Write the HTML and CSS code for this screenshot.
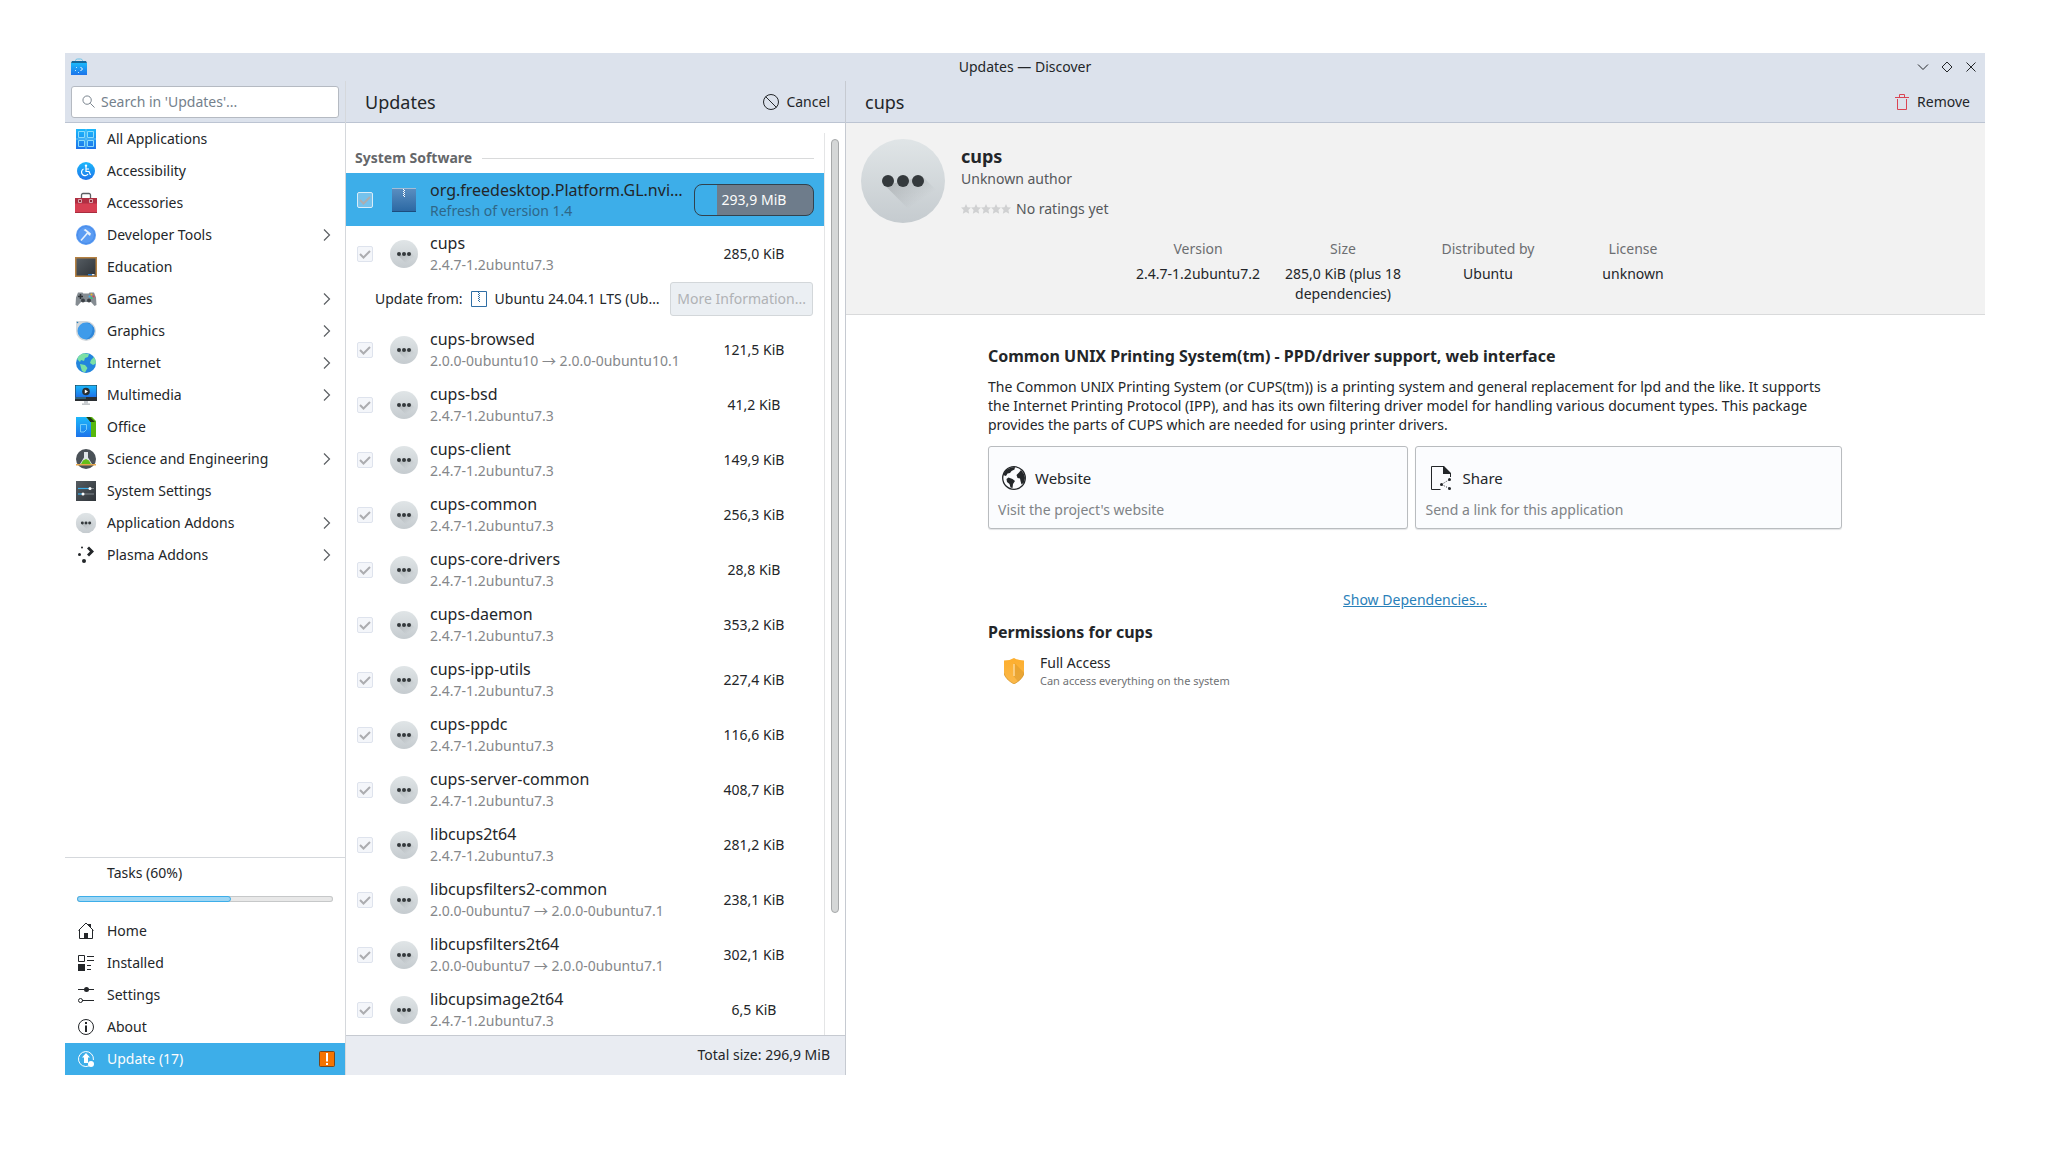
FILE: index.html
```html
<!DOCTYPE html>
<html lang="en">
<head>
  <meta charset="UTF-8">
  <meta name="viewport" content="width=device-width, initial-scale=1.0">
  <title>Updates — Discover</title>
  <link rel="stylesheet" href="styles.css">
</head>
<body>
  <!-- shared icons -->
  <svg class="sprite" aria-hidden="true">
    <defs>
      <linearGradient id="grey" x1="0" y1="0" x2="0" y2="1"><stop offset="0" stop-color="#e0e5e7"/><stop offset="1" stop-color="#c5cbcf"/></linearGradient>
      <linearGradient id="shade" x1="0" y1="0" x2="1" y2="1"><stop offset="0" stop-color="#292c2f" stop-opacity=".22"/><stop offset=".7" stop-color="#292c2f" stop-opacity="0"/></linearGradient>
      <linearGradient id="blue" x1="0" y1="0" x2="0" y2="1"><stop offset="0" stop-color="#1cb8fb"/><stop offset="1" stop-color="#1d73ea"/></linearGradient>
      <linearGradient id="box" x1="0" y1="0" x2="0" y2="1"><stop offset="0" stop-color="#5b8fc2"/><stop offset="1" stop-color="#2a67a2"/></linearGradient>
      <linearGradient id="dark" x1="0" y1="0" x2="1" y2="1"><stop offset="0" stop-color="#555c62"/><stop offset="1" stop-color="#2f3439"/></linearGradient>
      <linearGradient id="gold" x1="0" y1="0" x2="0" y2="1"><stop offset="0" stop-color="#fdae2d"/><stop offset="1" stop-color="#fbb94b"/></linearGradient>
    </defs>
    <symbol id="package" viewBox="0 0 28 28">
      <circle cx="14" cy="14" r="14" fill="url(#grey)"/>
      <path d="M8 15.500 15 22.500 17.500 24 25 17 20.500 12.500z" fill="url(#shade)"/>
      <g fill="#34393c"><circle cx="9" cy="14" r="2"/><circle cx="14" cy="14" r="2"/><circle cx="19" cy="14" r="2"/></g>
    </symbol>
    <symbol id="chevron" viewBox="0 0 8 14"><path d="M1 1.500 6.500 7 1 12.500" fill="none" stroke="#5b5f63" stroke-width="1.200"/></symbol>
  </svg>

  <main class="window">
    <header class="titlebar">
      <svg class="app-icon" viewBox="0 0 16 18"><path d="M4.500 4V2.500A2 2 0 0 1 6.500 1h3a2 2 0 0 1 2 1.500V4" fill="none" stroke="#6bc3e8"/><path d="M1 3h14l1 2H0z" fill="#16689c"/><path d="M0 5h16v12H0z" fill="url(#blue)"/><path d="m9.500 9 2 2-2 2" fill="none" stroke="#fff"/><path d="M5 9h1v1H5zM4 12h1v1H4zM7 14h1v1H7z" fill="#bfe6ff"/></svg>
      <h1>Updates — Discover</h1>
      <div class="window-buttons">
        <button type="button" aria-label="Minimize"><svg viewBox="0 0 12 12"><path d="M1 3.500 6 8.500 11 3.500"/></svg></button>
        <button type="button" aria-label="Maximize"><svg viewBox="0 0 12 12"><path d="M6 1 11 6 6 11 1 6z"/></svg></button>
        <button type="button" aria-label="Close"><svg viewBox="0 0 12 12"><path d="M1.500 1.500l9 9M10.500 1.500l-9 9"/></svg></button>
      </div>
    </header>

    <div class="panes">
      <aside class="sidebar">
        <div class="toolbar search">
          <label for="search"><svg viewBox="0 0 14 14"><circle cx="5.500" cy="5.500" r="4.500"/><path d="m9 9 4.500 4.500"/></svg></label>
          <input type="search" id="search" placeholder="Search in 'Updates'..." aria-label="Search">
        </div>

        <nav class="menu categories">
          <a href="#"><svg viewBox="0 0 22 22"><path d="M1 1h20v20H1z" fill="url(#blue)"/><g fill="none" stroke="#8bdcfb"><path d="M3.500 3.500h6v6h-6zM12.500 3.500h6v6h-6zM3.500 12.500h6v6h-6zM12.500 12.500h6v6h-6z"/></g><path d="M11 1v20M1 11h20" stroke="#62c8f8"/></svg>All Applications</a>
          <a href="#"><svg viewBox="0 0 22 22"><circle cx="11" cy="11" r="9" fill="url(#blue)"/><g fill="none" stroke="#fff" stroke-width="1.200"><path d="M11 7v4.500h3l1.500 3.500M11 9h3M8.500 9a3.500 3.500 0 1 0 4.500 5"/></g><circle cx="11" cy="5.800" r="1.200" fill="#fff"/></svg>Accessibility</a>
          <a href="#"><svg viewBox="0 0 22 22"><path d="M6.500 6V3a1.500 1.500 0 0 1 1.500-1.500h6A1.500 1.500 0 0 1 15.500 3v3" fill="none" stroke="#5c5f63" stroke-width="1.300"/><path d="M0 6h22v15H0z" fill="#d63f52"/><path d="M0 6h22v5.500H0z" fill="#b02f42"/><path d="M0 20h22v1H0z" fill="#a92d3f"/><path d="M3.500 7.500h3v3h-3zM14.500 7.500h3v3h-3z" fill="#8e2636" stroke="#e3c5ca" stroke-width=".8"/></svg>Accessories</a>
          <a href="#"><svg viewBox="0 0 22 22"><circle cx="11" cy="11" r="10" fill="#5b9cf3"/><circle cx="11" cy="11" r="8.500" fill="none" stroke="#3d82e3" stroke-width=".6"/><path d="M6 16.500 12.500 9" stroke="#e7f1fd" stroke-width="1.600"/><path d="m8.500 6 2-1 5.500 4.500-1 2.500-2.500-2-1-2z" fill="#e7f1fd"/></svg>Developer Tools<svg class="more"><use href="#chevron"/></svg></a>
          <a href="#"><svg viewBox="0 0 22 22"><path d="M0 1h22v20H0z" fill="#b58142"/><path d="M1.500 2.500h19v17h-19z" fill="url(#dark)"/><path d="M13 18h4v1.300h-4z" fill="#2980d9"/><path d="M17 18h2.500v1.300H17z" fill="#eee"/></svg>Education</a>
          <a href="#"><svg viewBox="0 0 22 22"><path d="M3 4.500h4.500l.8 1h5.400l.8-1H19l2 5 .5 7.500-2 1-3.500-4H6l-3.500 4-2-1L1 9.500z" fill="#858c92"/><path d="M5.500 6v5M3 8.500h5" stroke="#30353a" stroke-width="1.600"/><circle cx="8" cy="12.500" r="2" fill="#3c4146"/><circle cx="14" cy="12.500" r="2" fill="#3c4146"/><circle cx="16.500" cy="6.500" r="1" fill="#f0b429"/><circle cx="18.500" cy="8.500" r="1" fill="#da4453"/><circle cx="14.500" cy="8.500" r="1" fill="#3daee9"/><circle cx="16.500" cy="10" r="1" fill="#2ecc71"/></svg>Games<svg class="more"><use href="#chevron"/></svg></a>
          <a href="#"><svg viewBox="0 0 22 22"><path d="M1 1h10a10 10 0 1 1-10 10z" fill="#d3d8db"/><circle cx="11" cy="11" r="8.500" fill="#3f9bea"/><path d="M11 2.500A8.500 8.500 0 0 1 11 19.500 12 12 0 0 0 17 5z" fill="#2f86d8"/><circle cx="2.500" cy="2.500" r=".8" fill="#2980b9"/></svg>Graphics<svg class="more"><use href="#chevron"/></svg></a>
          <a href="#"><svg viewBox="0 0 22 22"><circle cx="11" cy="11" r="10" fill="#2385dd"/><path d="M2 7A10 10 0 0 1 9 1.200L14 2l-1 3-3 1-1 3-3-1-1 2zM5 12l5 1 2.500 3L10 20.500 7 19l-1-3zM16 8l3-3a10 10 0 0 1 2 6.500L18 13l-3-2z" fill="#7be0a5"/></svg>Internet<svg class="more"><use href="#chevron"/></svg></a>
          <a href="#"><svg viewBox="0 0 22 22"><path d="M0 1h22v16H0z" fill="#2a2e32"/><path d="M0.500 1.500h21V13H.5z" fill="url(#blue)"/><circle cx="11" cy="7.500" r="3.800" fill="#2a2e32"/><path d="M9.800 5.500v4l3.200-2z" fill="#fff"/><path d="M0 14h11" stroke="#3daee9" stroke-width=".8"/><path d="M9 17h4v2.500H9z" fill="#c8ccd0"/><path d="M7 19.500h8v1.300H7z" fill="#b4b9bd"/></svg>Multimedia<svg class="more"><use href="#chevron"/></svg></a>
          <a href="#"><svg viewBox="0 0 22 22"><path d="M11 1h6l4 4v16H11z" fill="#58b80d"/><path d="M1 1h10l5 5v15H1z" fill="url(#blue)"/><path d="M11.500 1H15v4.500zM15 1l5 5h-5z" fill="#223a13"/><path d="M5.500 8.500h6v5l-2.500 2.500H5.500z" fill="none" stroke="#7fd3fb" stroke-width=".9"/></svg>Office</a>
          <a href="#"><svg viewBox="0 0 22 22"><circle cx="11" cy="11" r="10" fill="#4a5157"/><path d="M9 4h4v5.500L17 16H5l4-6.500z" fill="#dfe5e8"/><path d="m8 12.500 3-1.500 3 1.500 2 3.500H6z" fill="#63bd19"/><path d="M1 16h20v1.500H1z" fill="#e6a84e"/></svg>Science and Engineering<svg class="more"><use href="#chevron"/></svg></a>
          <a href="#"><svg viewBox="0 0 22 22"><path d="M1 1h20v20H1z" fill="url(#dark)"/><path d="M3 8.500h12" stroke="#3daee9" stroke-width="1.200"/><path d="M15 8.500h4M8 14h11" stroke="#7e858b" stroke-width="1.200"/><path d="M3 14h5" stroke="#3daee9" stroke-width="1.200"/><circle cx="15" cy="8.500" r="1.500" fill="#fff"/><circle cx="8" cy="14" r="1.500" fill="#fff"/></svg>System Settings</a>
          <a href="#"><svg viewBox="-1 -1 30 30"><use href="#package" width="28" height="28"/></svg>Application Addons<svg class="more"><use href="#chevron"/></svg></a>
          <a href="#"><svg viewBox="0 0 22 22"><g fill="#232629"><circle cx="7" cy="3.500" r="1"/><circle cx="4.500" cy="10.500" r="1.500"/><circle cx="9" cy="17" r="2"/><path d="m12 4.500 2-2 5 5-5 5-2-2 3-3z"/></g></svg>Plasma Addons<svg class="more"><use href="#chevron"/></svg></a>
        </nav>

        <div class="tasks">
          <label for="tasks">Tasks (60%)</label>
          <progress id="tasks" value="60" max="100"></progress>
        </div>

        <nav class="menu">
          <a href="#"><svg viewBox="0 0 22 22"><path d="M4.500 10v8.500h13V10M3.500 10.500 11 3l7.500 7.500" fill="none" stroke="#232629"/><path d="M9 13h4v6H9zM12.500 4H16v4z" fill="#232629"/></svg>Home</a>
          <a href="#"><svg viewBox="0 0 22 22"><path d="M3.500 3.500h6v6h-6zM12 4.500h7M12 8.500h7M12 13.500h4M12 17.500h4" fill="none" stroke="#232629"/><path d="M3 12h7v7H3z" fill="#232629"/></svg>Installed</a>
          <a href="#"><svg viewBox="0 0 22 22"><path d="M3 5.500h16M7 16.500h12" stroke="#232629"/><circle cx="11.500" cy="5.500" r="2.500" fill="#232629"/><circle cx="5.500" cy="16.500" r="2" fill="none" stroke="#232629"/></svg>Settings</a>
          <a href="#"><svg viewBox="0 0 22 22"><circle cx="11" cy="11" r="7.500" fill="none" stroke="#232629"/><path d="M10 6h2v2h-2zM10 9.500h2V16h-2z" fill="#232629"/></svg>About</a>
          <a href="#" class="active"><svg viewBox="0 0 22 22"><path d="M14 17.900A7.500 7.500 0 1 1 18.400 12" fill="none" stroke="#fff"/><path d="m11 5 4 4.500h-2V15H9V9.500H7z" fill="#fff"/><circle cx="16" cy="16" r="3" fill="#fff"/></svg>Update (17)<svg class="alert" viewBox="0 0 16 16"><rect x=".5" y=".5" width="15" height="15" rx="1" fill="#f67400" stroke="#74471f"/><path d="M7 2h2v8.500H7zM7 12h2v2H7z" fill="#fff"/></svg></a>
        </nav>
      </aside>

      <section class="updates">
        <div class="toolbar">
          <h2>Updates</h2>
          <button type="button" class="action"><svg viewBox="0 0 16 16"><circle cx="8" cy="8" r="7.500" fill="none" stroke="#232629"/><path d="m2.500 2.500 11 11" stroke="#232629"/></svg>Cancel</button>
        </div>

        <div class="scroll">
          <div class="list">
            <h3>System Software</h3>
            <ul>
              <li class="selected">
                <input type="checkbox" aria-label="org.freedesktop.Platform.GL.nvidia" checked disabled>
                <svg viewBox="0 0 28 28"><path d="M2 2h24v24H2z" fill="url(#box)"/><path d="M2 2h24v1H2z" fill="#a3bdd6"/><path d="M2 25h24v1H2z" fill="#1c4c7d"/><path d="M13.500 3v8M14.500 4v8" stroke="#fff" stroke-dasharray="1"/></svg>
                <div class="name"><strong>org.freedesktop.Platform.GL.nvi…</strong><span>Refresh of version 1.4</span></div>
                <div class="size pill">293,9 MiB</div>
              </li>
              <li>
                <input type="checkbox" aria-label="cups" checked disabled>
                <svg><use href="#package"/></svg>
                <div class="name"><strong>cups</strong><span>2.4.7-1.2ubuntu7.3</span></div>
                <div class="size">285,0 KiB</div>
              </li>
              <li class="source">
                <span>Update from:</span>
                <svg viewBox="0 0 16 16"><path d="M.5.5h15v15H.5z" fill="#fff" stroke="#2f6ea5"/><path d="M7.500 1v9M8.500 2v9" stroke="#2f6ea5" stroke-dasharray="1"/></svg>
                <span class="origin">Ubuntu 24.04.1 LTS (Ub…</span>
                <button type="button" disabled>More Information...</button>
              </li>
              <li>
                <input type="checkbox" aria-label="cups-browsed" checked disabled>
                <svg><use href="#package"/></svg>
                <div class="name"><strong>cups-browsed</strong><span>2.0.0-0ubuntu10 <i>→</i> 2.0.0-0ubuntu10.1</span></div>
                <div class="size">121,5 KiB</div>
              </li>
              <li>
                <input type="checkbox" aria-label="cups-bsd" checked disabled>
                <svg><use href="#package"/></svg>
                <div class="name"><strong>cups-bsd</strong><span>2.4.7-1.2ubuntu7.3</span></div>
                <div class="size">41,2 KiB</div>
              </li>
              <li>
                <input type="checkbox" aria-label="cups-client" checked disabled>
                <svg><use href="#package"/></svg>
                <div class="name"><strong>cups-client</strong><span>2.4.7-1.2ubuntu7.3</span></div>
                <div class="size">149,9 KiB</div>
              </li>
              <li>
                <input type="checkbox" aria-label="cups-common" checked disabled>
                <svg><use href="#package"/></svg>
                <div class="name"><strong>cups-common</strong><span>2.4.7-1.2ubuntu7.3</span></div>
                <div class="size">256,3 KiB</div>
              </li>
              <li>
                <input type="checkbox" aria-label="cups-core-drivers" checked disabled>
                <svg><use href="#package"/></svg>
                <div class="name"><strong>cups-core-drivers</strong><span>2.4.7-1.2ubuntu7.3</span></div>
                <div class="size">28,8 KiB</div>
              </li>
              <li>
                <input type="checkbox" aria-label="cups-daemon" checked disabled>
                <svg><use href="#package"/></svg>
                <div class="name"><strong>cups-daemon</strong><span>2.4.7-1.2ubuntu7.3</span></div>
                <div class="size">353,2 KiB</div>
              </li>
              <li>
                <input type="checkbox" aria-label="cups-ipp-utils" checked disabled>
                <svg><use href="#package"/></svg>
                <div class="name"><strong>cups-ipp-utils</strong><span>2.4.7-1.2ubuntu7.3</span></div>
                <div class="size">227,4 KiB</div>
              </li>
              <li>
                <input type="checkbox" aria-label="cups-ppdc" checked disabled>
                <svg><use href="#package"/></svg>
                <div class="name"><strong>cups-ppdc</strong><span>2.4.7-1.2ubuntu7.3</span></div>
                <div class="size">116,6 KiB</div>
              </li>
              <li>
                <input type="checkbox" aria-label="cups-server-common" checked disabled>
                <svg><use href="#package"/></svg>
                <div class="name"><strong>cups-server-common</strong><span>2.4.7-1.2ubuntu7.3</span></div>
                <div class="size">408,7 KiB</div>
              </li>
              <li>
                <input type="checkbox" aria-label="libcups2t64" checked disabled>
                <svg><use href="#package"/></svg>
                <div class="name"><strong>libcups2t64</strong><span>2.4.7-1.2ubuntu7.3</span></div>
                <div class="size">281,2 KiB</div>
              </li>
              <li>
                <input type="checkbox" aria-label="libcupsfilters2-common" checked disabled>
                <svg><use href="#package"/></svg>
                <div class="name"><strong>libcupsfilters2-common</strong><span>2.0.0-0ubuntu7 <i>→</i> 2.0.0-0ubuntu7.1</span></div>
                <div class="size">238,1 KiB</div>
              </li>
              <li>
                <input type="checkbox" aria-label="libcupsfilters2t64" checked disabled>
                <svg><use href="#package"/></svg>
                <div class="name"><strong>libcupsfilters2t64</strong><span>2.0.0-0ubuntu7 <i>→</i> 2.0.0-0ubuntu7.1</span></div>
                <div class="size">302,1 KiB</div>
              </li>
              <li>
                <input type="checkbox" aria-label="libcupsimage2t64" checked disabled>
                <svg><use href="#package"/></svg>
                <div class="name"><strong>libcupsimage2t64</strong><span>2.4.7-1.2ubuntu7.3</span></div>
                <div class="size">6,5 KiB</div>
              </li>
            </ul>
          </div>
          <div class="scrollbar"><div class="thumb"></div></div>
        </div>

        <footer>Total size: 296,9 MiB</footer>
      </section>

      <section class="details">
        <div class="toolbar">
          <h2>cups</h2>
          <button type="button" class="action"><svg viewBox="0 0 16 16"><path d="M1 3.500h14M5.500 3V.5h5V3M3.500 5v10.500h9V5" fill="none" stroke="#da4453"/></svg>Remove</button>
        </div>

        <div class="summary">
          <div class="app">
            <svg class="logo"><use href="#package"/></svg>
            <div>
              <h3>cups</h3>
              <p>Unknown author</p>
              <p class="rating">
                <svg viewBox="0 0 50 10"><defs><path id="star" d="m5 0 1.500 3.200 3.500.4L7.400 6l.8 3.700L5 7.900 1.800 9.700 2.600 6 0 3.600l3.500-.4z"/></defs><g fill="#d0d1d2"><use href="#star"/><use href="#star" x="10"/><use href="#star" x="20"/><use href="#star" x="30"/><use href="#star" x="40"/></g></svg>
                No ratings yet
              </p>
            </div>
          </div>
          <dl>
            <div><dt>Version</dt><dd>2.4.7-1.2ubuntu7.2</dd></div>
            <div><dt>Size</dt><dd>285,0 KiB (plus 18 dependencies)</dd></div>
            <div><dt>Distributed by</dt><dd>Ubuntu</dd></div>
            <div><dt>License</dt><dd>unknown</dd></div>
          </dl>
        </div>

        <article>
          <h3>Common UNIX Printing System(tm) - PPD/driver support, web interface</h3>
          <p>The Common UNIX Printing System (or CUPS(tm)) is a printing system and general replacement for lpd and the like. It supports the Internet Printing Protocol (IPP), and has its own filtering driver model for handling various document types. This package provides the parts of CUPS which are needed for using printer drivers.</p>
          <div class="cards">
            <button type="button">
              <span class="card-title"><svg viewBox="0 0 24 24"><circle cx="12" cy="12" r="11.300" fill="none" stroke="#232629" stroke-width="1.300"/><path d="M1 9 4 4 9 1.500 13 1l-.5 2.500L9.500 5 8 7 5.500 7.500 4 10zM4.500 13l2-1.500 4 1.500 2.500 2-2 3-.5 4-2-.5L7.500 18 5 16zM14.500 9l2.500-2.500L19 4l3 4 1 4-1 4.500-2.500 2-1-3.500-.5-2.500-2.500-.5z" fill="#232629"/></svg>Website</span>
              <span class="hint">Visit the project's website</span>
            </button>
            <button type="button">
              <span class="card-title"><svg viewBox="0 0 24 24"><path d="M11.500 23.500h-9V.5h12" fill="none" stroke="#232629"/><path d="M14 0h1l7 7v4h-1V8h-7z" fill="#232629"/><path d="m12.500 18.500 8-5M12.500 18.500l8 4" stroke="#232629" stroke-dasharray="1 1.500"/><g fill="#232629"><circle cx="12.500" cy="18.500" r="1.500"/><circle cx="20.500" cy="13.500" r="1.500"/><circle cx="20.500" cy="22.500" r="1.500"/></g></svg>Share</span>
              <span class="hint">Send a link for this application</span>
            </button>
          </div>
          <a class="deps" href="#">Show Dependencies...</a>
          <h3>Permissions for cups</h3>
          <div class="permission">
            <svg viewBox="0 0 20 26"><path d="M0 2.500Q6 2.500 10 0q4 2.500 10 2.500V15q-1 6-10 11Q1 21 0 15z" fill="url(#gold)"/><path d="M10.500 5 20 14.500V15q-1 5-6 8.500L9.500 18z" fill="#c98a1f" opacity=".35"/><path d="M0 15q1 6 10 11 9-5 10-11" fill="none" stroke="#d79527" stroke-width=".8"/><path d="M9.200 6h1.600v12H9.200z" fill="#fdd590"/></svg>
            <div>
              <p>Full Access</p>
              <small>Can access everything on the system</small>
            </div>
          </div>
        </article>
      </section>
    </div>
  </main>
</body>
</html>
```
FILE: styles.css
```css
* {
  box-sizing: border-box;
}
body {
  display: flex;
  height: 100vh;
  margin: 0;
  padding: 53px 65px 77px;
  background: #fff;
  color: #232629;
  font: 14px/20px "Noto Sans", sans-serif;
}
h1, h2, h3, p, ul, dl, dd {
  margin: 0;
  padding: 0;
}
button, input {
  color: inherit;
  font: inherit;
}
a {
  color: inherit;
  text-decoration: none;
}
svg {
  flex: none;
}
.sprite {
  position: absolute;
  width: 0;
  height: 0;
}

/* window frame */
.window {
  display: flex;
  flex: 1;
  flex-direction: column;
  min-width: 0;
}
.titlebar {
  display: grid;
  grid-template-columns: 1fr auto 1fr;
  align-items: center;
  height: 28px;
  padding: 0 8px;
  background: #dce2ec;
}
.titlebar h1 {
  font-size: 14px;
  font-weight: normal;
}
.app-icon {
  width: 16px;
  height: 18px;
  margin-left: -2px;
}
.window-buttons {
  display: flex;
  justify-content: flex-end;
  gap: 12px;
}
.window-buttons button {
  display: flex;
  padding: 0;
  border: none;
  background: none;
}
.window-buttons svg {
  width: 12px;
  height: 12px;
  fill: none;
  stroke: #232629;
}
.panes {
  display: flex;
  flex: 1;
  min-height: 0;
}
.toolbar {
  display: flex;
  align-items: center;
  justify-content: space-between;
  height: 42px;
  padding: 0 15px 0 19px;
  border-bottom: 1px solid #bcc4d2;
  background: #dce2ec;
}
.toolbar h2 {
  font-size: 18px;
  font-weight: normal;
}
.action {
  display: flex;
  align-items: center;
  gap: 7px;
  padding: 0;
  border: none;
  background: none;
}
.action svg {
  width: 16px;
  height: 16px;
}

/* sidebar */
.sidebar {
  display: flex;
  flex: none;
  flex-direction: column;
  width: 281px;
  border-right: 1px solid #d5d8dc;
}
.search {
  position: relative;
  padding: 0 6px;
}
.search label {
  position: absolute;
  left: 17px;
  display: flex;
}
.search svg {
  width: 13px;
  height: 13px;
  fill: none;
  stroke: #6f7a85;
}
.search input {
  width: 100%;
  height: 32px;
  padding: 0 8px 0 29px;
  border: 1px solid #b5bac2;
  border-radius: 3px;
  background: #fff;
}
.search input::placeholder {
  color: #75818c;
}
.menu a {
  display: flex;
  align-items: center;
  gap: 10px;
  height: 32px;
  padding: 0 10px;
}
.menu svg {
  width: 22px;
  height: 22px;
}
.menu .more {
  width: 8px;
  height: 14px;
  margin: 0 4px 0 auto;
}
.menu .alert {
  width: 16px;
  height: 16px;
  margin-left: auto;
}
.menu .active {
  background: #3daee9;
  color: #fcfcfc;
}
.categories {
  flex: 1;
}
.tasks {
  display: flex;
  flex-direction: column;
  height: 58px;
  padding: 5px 12px 0;
  border-top: 1px solid #d5d8dc;
}
.tasks label {
  margin-left: 30px;
}
.tasks progress {
  width: 100%;
  height: 6px;
  margin-top: 13px;
  border: none;
  appearance: none;
}
.tasks progress::-webkit-progress-bar {
  border-radius: 3px;
  background: #e8e8e8;
  box-shadow: inset 0 0 0 1px #c6c8c9;
}
.tasks progress::-webkit-progress-value {
  border: 1px solid #3daee9;
  border-radius: 3px;
  background: #9ed6f4;
}

/* update list */
.updates {
  display: flex;
  flex: none;
  flex-direction: column;
  width: 500px;
  border-right: 1px solid #c6cad1;
}
.scroll {
  display: flex;
  flex: 1;
  min-height: 0;
}
.list {
  flex: 1;
  min-width: 0;
  overflow: hidden;
}
.list h3 {
  display: flex;
  align-items: center;
  gap: 10px;
  height: 50px;
  padding: 20px 10px 0 9px;
  color: #65676a;
  font-size: 14px;
}
.list h3::after {
  flex: 1;
  height: 1px;
  background: #d9dadb;
  content: "";
}
.list ul {
  list-style: none;
}
.list li {
  display: flex;
  align-items: center;
  height: 55px;
  padding: 0 10px 0 11px;
}
.list li.selected {
  height: 53px;
  background: #3daee9;
}
.list input {
  flex: none;
  width: 16px;
  height: 16px;
  margin: 0 17px 0 0;
  border: 1px solid #dee3ed;
  border-radius: 2px;
  background: #f4f6fa url("data:image/svg+xml,%3Csvg xmlns='http://www.w3.org/2000/svg' viewBox='0 0 14 14'%3E%3Cpath d='m2 7 3.500 3.500L12 4' fill='none' stroke='%23acadb0' stroke-width='2'/%3E%3C/svg%3E");
  appearance: none;
}
.selected input {
  border-color: #d9edf9;
  background-color: #76c2ec;
}
.list li > svg {
  width: 28px;
  height: 28px;
}
.name {
  display: flex;
  flex: 1;
  flex-direction: column;
  gap: 1px;
  min-width: 0;
  padding: 0 8px 0 12px;
}
.selected .name {
  gap: 0;
}
.name strong {
  font-size: 16px;
  font-weight: normal;
  line-height: 22px;
  white-space: nowrap;
}
.name span {
  color: #85878a;
}
.name i {
  font-family: "Noto Sans CJK JP", sans-serif;
  font-style: normal;
  line-height: 1;
}
.selected .name span {
  color: #2f6788;
}
.size {
  width: 120px;
  text-align: center;
}
.pill {
  height: 32px;
  padding: 5px 0;
  border: 1px solid #31424f;
  border-radius: 8px;
  background: linear-gradient(#3daee9, #3daee9) left / 22px 100% no-repeat #6e7c8b;
  color: #fcfcfc;
}
.list .source {
  align-items: flex-start;
  gap: 8px;
  height: 41px;
  padding: 1px 11px 0 29px;
  line-height: 34px;
}
.list .source svg {
  width: 16px;
  height: 16px;
  margin-top: 9px;
}
.origin {
  flex: 1;
  white-space: nowrap;
}
.source button {
  height: 34px;
  padding: 0 6px;
  border: 1px solid #d3d7da;
  border-radius: 3px;
  background: #ebeff3;
  color: #b0b2b5;
  line-height: 20px;
}
.scrollbar {
  width: 21px;
  margin-top: 10px;
  padding: 6px;
  border-left: 1px solid #e4e5e6;
}
.thumb {
  width: 8px;
  height: 87%;
  border: 1px solid #a6a8a9;
  border-radius: 4px;
  background: #d5d7d7;
}
.updates footer {
  height: 40px;
  padding: 9px 15px 0;
  border-top: 1px solid #c6cad1;
  background: #e9ecf2;
  text-align: right;
}

/* package details */
.details {
  flex: 1;
  min-width: 0;
}
.summary {
  padding: 16px 15px 10px;
  border-bottom: 1px solid #d9dadb;
  background: #f2f2f2;
}
.app {
  display: flex;
  gap: 16px;
}
.logo {
  width: 84px;
  height: 84px;
}
.app h3 {
  padding: 6px 0 2px;
  font-size: 18px;
  line-height: 22px;
}
.app p {
  color: #55585b;
}
.app .rating {
  display: flex;
  align-items: center;
  gap: 5px;
  padding-top: 10px;
}
.rating svg {
  width: 50px;
  height: 10px;
}
.summary dl {
  display: flex;
  justify-content: center;
  gap: 20px;
  margin-top: 16px;
  text-align: center;
}
.summary dl div {
  width: 125px;
}
.summary dt {
  margin-bottom: 5px;
  color: #6c6e71;
}
article {
  max-width: 855px;
  margin: 0 auto;
  padding: 29px 1px 0 0;
}
article h3 {
  font-size: 16px;
  line-height: 24px;
}
article > p {
  margin: 9px 0 12px;
  line-height: 19px;
}
.cards {
  display: grid;
  grid-template-columns: 420fr 426fr;
  gap: 7px;
}
.cards button {
  display: flex;
  flex-direction: column;
  gap: 10px;
  height: 83px;
  padding: 19px 9px 0;
  border: 1px solid #b9bcbf;
  border-radius: 3px;
  background: #fbfcfe;
  box-shadow: 0 1px 1px #e3e4e6;
  text-align: left;
}
.card-title {
  display: flex;
  align-items: center;
  gap: 9px;
  padding-left: 4px;
  font-size: 15px;
}
.cards svg {
  width: 24px;
  height: 24px;
}
.hint {
  color: #808386;
}
.deps {
  display: block;
  width: fit-content;
  margin: 61px auto 10px;
  color: #2980b9;
  text-decoration: underline;
}
.permission {
  display: flex;
  align-items: center;
  gap: 16px;
  padding: 9px 16px;
}
.permission svg {
  width: 20px;
  height: 26px;
}
.permission small {
  display: block;
  color: #6f7174;
  font-size: 11px;
  line-height: 16px;
}
```
